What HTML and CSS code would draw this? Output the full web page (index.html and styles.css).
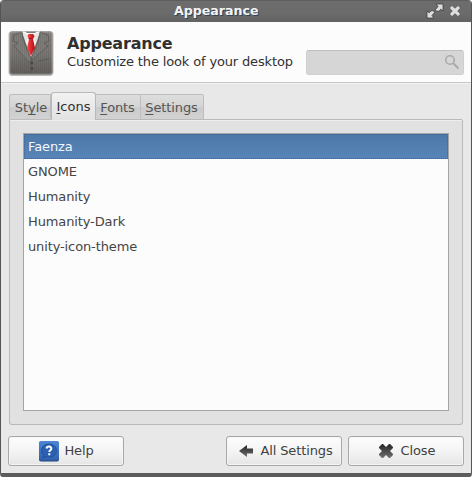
FILE: index.html
```html
<!DOCTYPE html>
<html lang="en">
<head>
<meta charset="utf-8">
<title>Appearance</title>
<link rel="stylesheet" href="styles.css">
</head>
<body>
<div class="window">
  <header class="titlebar">
    <span class="window-title">Appearance</span>
    <svg class="maximize" width="18" height="16" viewBox="0 0 18 16"><path d="M10 1h7v7l-2.200-1.800-1.800 2h-3L9.500 6.500 12 3.400zM8 15H1V8l2.200 1.800 1.800-2h3l.5 1.700L6 12.600z" fill="#dedede" stroke="#3c3c3c" stroke-width=".8"/></svg>
    <svg class="shut" width="14" height="14" viewBox="0 0 14 14"><path d="M4 1.500 7 4.300l3-2.800 2.500 2.500-2.800 3 2.800 3-2.500 2.500-3-2.800-3 2.800L1.500 10l2.800-3-2.800-3z" fill="#dedede" stroke="#353535" stroke-width=".5"/></svg>
  </header>
  <section class="heading">
    <svg class="suit" width="46" height="46" viewBox="0 0 46 46">
      <defs>
        <linearGradient id="cloth" x2="0" y2="1"><stop stop-color="#85827f"/><stop offset=".55" stop-color="#787572"/><stop offset="1" stop-color="#615e5c"/></linearGradient>
        <linearGradient id="tie" x2="1" y2="0"><stop stop-color="#f04a4a"/><stop offset=".55" stop-color="#dd2428"/><stop offset="1" stop-color="#a80e12"/></linearGradient>
        <pattern id="pin" width="2" height="4" patternUnits="userSpaceOnUse"><path d="M.5 0v4" stroke="#3e3c3a" stroke-opacity=".16"/></pattern>
      </defs>
      <rect x=".5" y="1" width="45" height="45" rx="4" fill="#b9b9b9"/>
      <rect x="1.500" y="1.500" width="43" height="43" rx="3" fill="url(#cloth)"/>
      <rect x="1.500" y="1.500" width="43" height="43" rx="3" fill="url(#pin)"/>
      <path d="M14 1.500h18L23 28z" fill="#f4f4f4"/>
      <path d="M14 2l4 10 3-6zM32 2l-4 10-4-6z" fill="#e4e4e4"/>
      <path d="M17 1.500h12l-2 1.500h-8z" fill="#77716d"/>
      <path d="M20.500 4h4.500l1.500 2-1.500 3 2 9-4 8-4-8 2-9-1.500-3z" fill="url(#tie)"/>
      <path d="M20.500 8.500h4" stroke="#9c1518"/>
      <path d="M14 2 6 5l-1 6 5 2-4 3 17 18v-6C19 20 15 11 14 2zM32 2l8 3 1 6-5 2 4 3-16 14-1-2c4-8 8-17 9-26z" fill="#807d7a" stroke="#5b5855" stroke-width=".8"/>
      <path d="M14 2 6 5l-1 6 5 2-4 3 17 18v-6C19 20 15 11 14 2zM32 2l8 3 1 6-5 2 4 3-16 14-1-2c4-8 8-17 9-26z" fill="url(#pin)"/>
      <path d="M23 30v14" stroke="#575452"/>
      <path d="M31 31l4-1 6-1" stroke="#55524f" stroke-width=".8" fill="none"/>
      <circle cx="24" cy="33" r="1.200" fill="#474442"/><circle cx="24" cy="38.500" r="1.200" fill="#474442"/>
      <rect x="2" y="2" width="42" height="42" rx="3" fill="none" stroke="#fff" stroke-opacity=".2"/>
    </svg>
    <div class="intro"><h1>Appearance</h1><p>Customize the look of your desktop</p></div>
    <div class="search"><svg width="16" height="16" viewBox="0 0 16 16" fill="none" stroke="#aaa"><circle cx="6" cy="6" r="4.300" stroke-width="1.600"/><path d="M9 9l5.500 5.500" stroke-width="2"/></svg></div>
  </section>
  <main class="body">
    <nav class="tabs">
      <span class="tab style">St<u>y</u>le</span><span class="tab active"><u>I</u>cons</span><span class="tab fonts"><u>F</u>onts</span><span class="tab settings"><u>S</u>ettings</span>
    </nav>
    <section class="panel">
      <ul class="list">
        <li class="selected">Faenza</li><li>GNOME</li><li>Humanity</li><li>Humanity-Dark</li><li>unity-icon-theme</li>
      </ul>
    </section>
    <footer class="actions">
      <button class="button help"><svg width="22" height="22" viewBox="0 0 22 22"><defs><linearGradient id="blue" x2="0" y2="1"><stop stop-color="#4d86d3"/><stop offset="1" stop-color="#2f60ae"/></linearGradient></defs><rect x="1" y="1.500" width="20" height="20" rx="2" fill="#24447a"/><rect x="1" y="1" width="20" height="19.500" rx="2" fill="url(#blue)"/><path d="M11 4c4.500 0 7.500 2.700 7.500 6.500S15.500 17 11 17c-1.200 0-2 0-3-.5L4.500 18l.8-3C4 14 3.500 12.500 3.500 10.500 3.500 6.700 6.500 4 11 4z" fill="#2b60b2" stroke="#1d4a92" stroke-width=".7"/><path d="M8.500 8.500C9 5.800 13.500 6 13.300 8.700c-.1 1.600-2 1.700-2 3.300M11.300 13.200v2" fill="none" stroke="#fff" stroke-width="2"/></svg><span>Help</span></button>
      <button class="button all"><svg width="16" height="14" viewBox="0 0 16 14"><defs><linearGradient id="ink" x2="0" y2="1"><stop stop-color="#242424"/><stop offset="1" stop-color="#707070"/></linearGradient></defs><path d="M1 7 9 1v3.500h6v5H9V13z" fill="url(#ink)"/></svg><span>All Settings</span></button>
      <button class="button close"><svg width="16" height="16" viewBox="0 0 16 16"><path d="M4 1h1l3 3 3-3h1l3 3v1l-3 3 3 3v1l-3 3h-1l-3-3-3 3H4l-3-3v-1l3-3-3-3V4z" fill="url(#ink)"/></svg><span>Close</span></button>
    </footer>
  </main>
</div>
</body>
</html>
```
FILE: styles.css
```css
* { box-sizing: border-box; }
body { margin: 0; background: #fff; font: 13px/15px "DejaVu Sans", sans-serif; color: #3c3c3c; }
h1, p, ul { margin: 0; padding: 0; }
.window { width: 472px; height: 477px; display: flex; flex-direction: column; border: 1px solid #555; border-top: 0; border-bottom: 4px solid #5b5b5b; border-radius: 4px 4px 3px 3px; background: #e8e8e8; overflow: hidden; }
.titlebar { height: 22px; flex: none; display: flex; align-items: center; padding-left: 173px; background: linear-gradient(#4f4f4f 0, #6d6d6d 1px, #6b6b6b 60%, #626262); }
.window-title { width: 251px; padding-bottom: 2px; color: #f3f3f3; font-weight: bold; text-shadow: 1px 1px 0 #344454; font-size: 12.6px; white-space: nowrap; }
.maximize { margin-left: 1px; }
.shut { margin-left: 4px; }
.heading { height: 61px; flex: none; display: flex; background: #fcfcfc; border-bottom: 1px solid #c7c7c7; }
.suit { margin: 8px 0 0 7px; flex: none; }
.intro { width: 239px; margin: 12px 0 0 13px; color: #303030; white-space: nowrap; }
.intro h1 { font-size: 16px; line-height: 19px; letter-spacing: -.2px; }
.intro p { line-height: 17px; letter-spacing: -.15px; }
.search { width: 158px; height: 25px; margin-top: 28px; border: 1px solid #d0d0d0; border-top-color: #bebebe; border-radius: 3px; background: #d6d6d6; display: flex; justify-content: flex-end; padding: 3px 3px 0 0; }
.body { padding: 9px 8px 0 7px; display: flex; flex-direction: column; border-top: 1px solid #f3f3f3; }
.tabs { height: 27px; padding-left: 1px; display: flex; align-items: flex-end; position: relative; }
.tab { height: 26px; border: 1px solid #bdbdbd; border-left: 0; background: linear-gradient(#dddddd, #d5d5d5 50%, #cbcbcb 51%, #d2d2d2); padding-top: 5px; text-align: center; color: #555; }
.tab u { text-decoration-thickness: 1px; text-underline-offset: 2px; text-decoration-skip-ink: none; }
.style { width: 42px; padding-left: 2px; border-left: 1px solid #bdbdbd; border-radius: 2px 0 0; }
.active { width: 45px; height: 28px; padding-top: 6px; border: 1px solid #b8b8b8; border-bottom: 0; border-radius: 3px 3px 0 0; background: linear-gradient(#f2f2f2, #e9e9e9 50%, #e2e2e2); color: #303030; }
.fonts { width: 45px; padding-right: 1px; letter-spacing: -.1px; }
.settings { width: 63px; padding-right: 1px; letter-spacing: -.1px; border-radius: 0 2px 0 0; }
.panel { height: 305px; width: 454px; margin-left: 1px; padding: 13px; border: 1px solid #b9b9b9; border-top: 0; border-radius: 0 0 3px 3px; background: #e1e1e1; box-shadow: inset 0 1px #ededed; }
.tabs::after { content: ""; position: absolute; left: 88px; right: 1px; bottom: 0; height: 1px; background: #b9b9b9; }
.list { height: 278px; width: 426px; border: 1px solid #a5a5a5; background: #fcfcfc; list-style: none; }
.list li { height: 25px; padding: 5px 4px; color: #454545; letter-spacing: -.12px; }
.list .selected { color: #f5f8fb; background: linear-gradient(#4b78a8, #5984b8); outline: 1px dotted #3e6694; outline-offset: -1px; }
.actions { display: flex; margin-top: 11px; }
.button { width: 116px; height: 30px; flex: none; padding: 0; border: 1px solid #a8a8a8; border-radius: 3px; background: linear-gradient(#fdfdfd, #f4f4f4 50%, #e5e5e5); box-shadow: inset 0 0 0 1px #f5f5f5; color: #404040; font: inherit; letter-spacing: -.12px; display: flex; align-items: center; justify-content: center; gap: 4px; white-space: nowrap; }
.button span { padding-bottom: 2px; }
.all { margin-left: 102px; padding-left: 3px; gap: 6px; }
.close { margin-left: 6px; padding-left: 1px; gap: 7px; }
```
